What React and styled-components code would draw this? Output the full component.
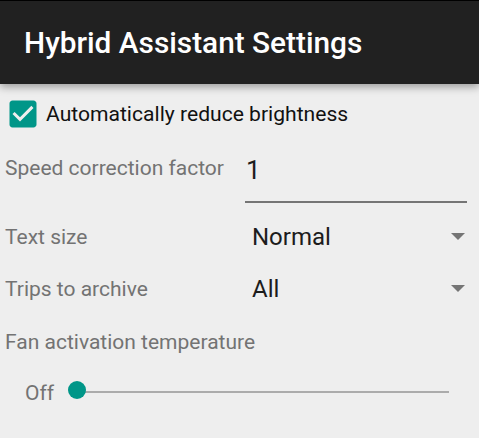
import React from "react";
import styled, { createGlobalStyle } from "styled-components";

const Global = createGlobalStyle`
  html, body { margin: 0; padding: 0; background: #eeeeee; }
  body { font-family: Roboto, "Noto Sans", "Liberation Sans", sans-serif; }
  * { box-sizing: border-box; }
`;

const Screen = styled.div`
  width: 479px;
  height: 438px;
  background: #eeeeee;
  border-top: 1px solid #000;
  overflow: hidden;
`;

const Toolbar = styled.header`
  position: relative;
  z-index: 1;
  height: 83px;
  background: #212121;
  display: flex;
  align-items: center;
  padding-left: 24px;
  box-shadow: 0 3px 8px rgba(0, 0, 0, 0.35);
`;

const Title = styled.h1`
  margin: 0;
  color: #ffffff;
  font-size: 29.8px;
  font-weight: 500;
  line-height: 35px;
`;

const Content = styled.main`
  display: flex;
  flex-direction: column;
`;

const CheckRow = styled.label`
  height: 60px;
  display: flex;
  align-items: center;
  padding-left: 5px;
  gap: 5px;
`;

const CheckText = styled.span`
  font-size: 21.1px;
  color: #111111;
  line-height: 24px;
`;

const Label = styled.span`
  font-size: 21px;
  line-height: 24px;
  color: #737373;
  padding-left: 5px;
  width: ${(p) => p.$width || "auto"};
  flex: none;
  margin-top: ${(p) => p.$offset || 0}px;
`;

const SpeedRow = styled.div`
  display: flex;
  align-items: flex-start;
  padding-top: 11px;
`;

const Field = styled.div`
  margin-left: 5px;
  width: 222px;
  padding-bottom: 16px;
  border-bottom: 2px solid #757575;
  font-size: 26px;
  line-height: 30px;
  color: #1c1c1c;
  padding-left: 1px;
`;

const SelectRow = styled.div`
  height: 52px;
  display: flex;
  align-items: center;
  margin-top: ${(p) => p.$top || 0}px;
`;

const Select = styled.div`
  margin-left: 5px;
  width: 222px;
  display: flex;
  align-items: center;
  justify-content: space-between;
  padding-left: 7px;
  padding-right: 2px;
`;

const SelectValue = styled.span`
  font-size: 24px;
  line-height: 28px;
  color: #1c1c1c;
`;

const Arrow = styled.span`
  width: 0;
  height: 0;
  border-left: 7px solid transparent;
  border-right: 7px solid transparent;
  border-top: 7px solid #757575;
  margin-top: -2px;
`;

const SectionLabel = styled(Label)`
  margin-top: 15px;
`;

const SliderRow = styled.div`
  display: flex;
  align-items: center;
  height: 24px;
  margin-top: 27px;
  padding-left: 25px;
`;

const SliderValue = styled.span`
  font-size: 21px;
  line-height: 24px;
  color: #737373;
  width: 28px;
`;

const Track = styled.div`
  position: relative;
  margin-left: 24px;
  width: 372px;
  height: 2px;
  background: #ababab;
  margin-top: -2px;
`;

const Thumb = styled.div`
  position: absolute;
  left: -9px;
  top: -10px;
  width: 18px;
  height: 18px;
  border-radius: 50%;
  background: #009688;
`;

const CheckIcon = () => (
  <svg width="36" height="36" viewBox="0 0 24 24" aria-hidden="true">
    <path
      fill="#009688"
      d="M19 3H5c-1.11 0-2 .9-2 2v14c0 1.1.89 2 2 2h14c1.11 0 2-.9 2-2V5c0-1.1-.89-2-2-2zm-9 14l-5-5 1.41-1.41L10 14.17l7.59-7.59L19 8l-9 9z"
    />
  </svg>
);

export default function App() {
  return (
    <Screen>
      <Global />
      <Toolbar>
        <Title>Hybrid Assistant Settings</Title>
      </Toolbar>
      <Content>
        <CheckRow>
          <CheckIcon />
          <CheckText>Automatically reduce brightness</CheckText>
        </CheckRow>
        <SpeedRow>
          <Label $width="240px" $offset={1}>Speed correction factor</Label>
          <Field>1</Field>
        </SpeedRow>
        <SelectRow $top={8}>
          <Label $width="240px">Text size</Label>
          <Select>
            <SelectValue>Normal</SelectValue>
            <Arrow />
          </Select>
        </SelectRow>
        <SelectRow>
          <Label $width="240px">Trips to archive</Label>
          <Select>
            <SelectValue>All</SelectValue>
            <Arrow />
          </Select>
        </SelectRow>
        <SectionLabel>Fan activation temperature</SectionLabel>
        <SliderRow>
          <SliderValue>Off</SliderValue>
          <Track>
            <Thumb />
          </Track>
        </SliderRow>
      </Content>
    </Screen>
  );
}
